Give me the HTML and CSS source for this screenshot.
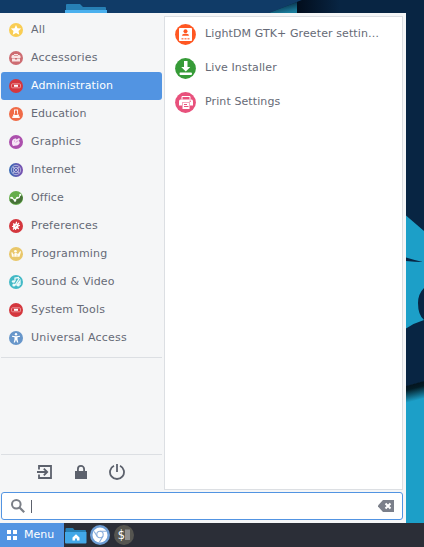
FILE: index.html
```html
<!DOCTYPE html>
<html lang="en">
<head>
<meta charset="utf-8">
<title>Menu</title>
<link rel="stylesheet" href="styles.css">
</head>
<body>
<svg class="wallpaper" viewBox="0 0 424 547" aria-hidden="true">
  <defs>
    <linearGradient id="shade" gradientUnits="userSpaceOnUse" x1="406" y1="386" x2="410" y2="402"><stop offset="0" stop-color="#04141f"/><stop offset=".25" stop-color="#031c26"/><stop offset="1" stop-color="#1c9fc8"/></linearGradient>
    <linearGradient id="top" x1="0" x2="1"><stop offset="0" stop-color="#020d1c"/><stop offset="1" stop-color="#082543"/></linearGradient>
    <linearGradient id="teal" x1="0" y1="0" x2=".5" y2="1"><stop offset=".3" stop-color="#06223a"/><stop offset="1" stop-color="#1b7d9c"/></linearGradient>
  </defs>
  <path fill="#082543" d="M0 0h424v547H0z"/>
  <path fill="#103b67" d="M0 0h302l-33 13H0z"/>
  <path fill="url(#teal)" d="M302 0l-33 13h28V2z"/>
  <path fill="url(#top)" d="M297 2l5-2h38v13h-43z"/>
  <path fill="#2780b5" d="M66 13V5q0-1 1-1h13l3 3h22q1 0 1 1v5z"/>
  <path fill="#4ab0ee" d="M65 10h42v3H65z"/>
  <path fill="#1c9fc8" d="M406 215.500l18 15.500v316h-18z"/>
  <path fill="#082543" d="M406 257.500q8 2.500 17 4.500q-8-.2-17-1zM424 288q-6 6-6 15 0 12 6 17zM424 320q-10 3-18 8.500v58l18-5z"/>
  <path fill="url(#shade)" d="M406 386l18-5v17l-18 6z"/>
</svg>

<main class="menu">
  <div class="panes">
    <nav class="sidebar">
      <ul class="categories">
        <li class="category"><svg class="cat-icon" viewBox="0 0 14 14"><circle cx="7" cy="7" r="7" fill="#f9cd53"/><path fill="#fff" d="M7 2l1.500 3.200 3.700.3-2.700 2.400.8 3.800L7 9.900l-3.300 1.800.8-3.800L1.800 5.500l3.700-.3z"/></svg>All</li>
        <li class="category"><svg class="cat-icon" viewBox="0 0 14 14"><circle cx="7" cy="7" r="7" fill="#cd6c72"/><path fill="#f8e5e5" d="M5 4V3h4v1h1.500l1 1v2h-9V5l1-1zM3 7.600h3v.8h2v-.8h3V10.500H3z"/><path stroke="#cd6c72" stroke-width=".6" d="M5 4.500h4"/></svg>Accessories</li>
        <li class="category selected"><svg class="cat-icon" viewBox="0 0 14 14"><circle cx="7" cy="7" r="7" fill="#d4373e"/><rect x="2.500" y="4.800" width="9" height="4" rx="1" fill="#d4373e" stroke="#efabad" stroke-width=".8"/><path fill="#fff" d="M5 5.800h4v2H5z"/></svg>Administration</li>
        <li class="category tight"><svg class="cat-icon" viewBox="0 0 14 14"><circle cx="7" cy="7" r="7" fill="#f06b47"/><path fill="none" stroke="#fff" stroke-width=".9" d="M5 3h4M5.500 3v3.500L3.500 10.500h7L8.500 6.500V3"/><path fill="#fff" d="M5 8h4l1.200 2.500H3.800z"/></svg>Education</li>
        <li class="category"><svg class="cat-icon" viewBox="0 0 14 14"><circle cx="7" cy="7" r="7" fill="#ac50ad"/><path fill="#f5e5f5" d="M3 6q1-3 4-2.500l.5 1L10 3l1 1-1.200 2q1.700.5.7 2.500Q9 11 7 10.500L4 11 3 9z"/><path stroke="#ac50ad" stroke-width=".6" d="M5 6h1M7 7.500l2-2"/></svg>Graphics</li>
        <li class="category tight"><svg class="cat-icon" viewBox="0 0 14 14"><defs><linearGradient id="net"><stop stop-color="#376bb5"/><stop offset="1" stop-color="#7b50b0"/></linearGradient></defs><circle cx="7" cy="7" r="7" fill="url(#net)"/><g fill="none" stroke="#d6d5ee" stroke-width=".7"><circle cx="7" cy="7" r="4.700"/><circle cx="7" cy="7" r="2.700"/><path d="M3.700 3.700l6.600 6.600m0-6.600l-6.600 6.600"/></g></svg>Internet</li>
        <li class="category tight"><svg class="cat-icon" viewBox="0 0 14 14"><circle cx="7" cy="7" r="7" fill="#65ad4b"/><path fill="#477238" d="M.5 9L3 7l3 3 6-6 1.800 2A7 7 0 0 1 .5 9z"/><path fill="none" stroke="#fff" stroke-width="1.100" d="M1 7l1.500-.5L6 9.500l2-3 2 .2L11.500 3"/><g fill="#fff"><circle cx="2.800" cy="6.800" r="1"/><circle cx="6" cy="9.500" r="1.200"/><circle cx="8.500" cy="6.700" r="1"/><circle cx="11.300" cy="3.700" r="1"/></g></svg>Office</li>
        <li class="category"><svg class="cat-icon" viewBox="0 0 14 14"><circle cx="7" cy="7" r="7" fill="#d4373e"/><path fill="none" stroke="#fff" stroke-width="1.200" d="M7.500 2.800L6.500 11M3 7.500l8-1M4.200 4.500l5.600 5.500M4 10.500l6-6.500"/><circle cx="6.700" cy="7.300" r="2.700" fill="#fff"/><path stroke="#d4373e" stroke-width=".6" d="M6 7.500L8 6"/></svg>Preferences</li>
        <li class="category"><svg class="cat-icon" viewBox="0 0 14 14"><circle cx="7" cy="7" r="7" fill="#e9c76a"/><g fill="#fffdf5"><circle cx="6.500" cy="4.200" r="1.300"/><path d="M5.500 6.500l1.200-.8L9 7l2.300-3 .7.700-1.500 5H3L2.300 5.500l1-.3 1 2z"/></g><path stroke="#e9c76a" stroke-width=".6" d="M5 7v2.500M8 7.500v2"/></svg>Programming</li>
        <li class="category"><svg class="cat-icon" viewBox="0 0 14 14"><circle cx="7" cy="7" r="7" fill="#42b9c6"/><g fill="none" stroke="#eefafa" stroke-width="1.300"><path d="M6 6V3l4-.5M5.500 11l5-8M7.500 10.500L11 6v4"/></g><g fill="#eefafa"><ellipse cx="4.500" cy="6.500" rx="1.700" ry="1.300"/><circle cx="4.800" cy="10" r="1.500"/><circle cx="9.300" cy="10" r="1.500"/></g></svg>Sound &amp; Video</li>
        <li class="category"><svg class="cat-icon" viewBox="0 0 14 14"><circle cx="7" cy="7" r="7" fill="#d4373e"/><rect x="2.500" y="4.800" width="9" height="4" rx="1" fill="#d4373e" stroke="#efabad" stroke-width=".8"/><path fill="#fff" d="M5 5.800h4v2H5z"/></svg>System Tools</li>
        <li class="category"><svg class="cat-icon" viewBox="0 0 14 14"><circle cx="7" cy="7" r="7" fill="#6796ca"/><circle cx="7" cy="3.200" r="1.200" fill="#fff"/><path fill="#fff" d="M3 4.800l4 .4 4-.4v1L8.500 6.300v2l.8 3.200H8.100L7 8.700l-1.100 2.800H4.700l.8-3.200v-2L3 5.800z"/></svg>Universal Access</li>
      </ul>
      <div class="session">
        <svg viewBox="0 0 16 16"><path fill="none" stroke="#5c616c" stroke-width="1.800" d="M2 5.500V2h12v12H2v-3.500"/><path fill="none" stroke="#5c616c" stroke-width="1.800" d="M0 8h9.500M6.800 4.700L10.200 8l-3.400 3.300"/></svg>
        <svg viewBox="0 0 16 16"><path fill="#5c616c" d="M2 7h12v8H2z"/><path fill="none" stroke="#5c616c" stroke-width="1.800" d="M4.900 8V5a3.100 3.100 0 0 1 6.200 0v3"/></svg>
        <svg viewBox="0 0 16 16"><path fill="none" stroke="#5c616c" stroke-width="1.800" d="M5 1.700a7 7 0 1 0 6 0M8 0v8"/></svg>
      </div>
    </nav>
    <ul class="apps">
      <li class="app"><svg class="app-icon" viewBox="0 0 21 21"><circle cx="10.500" cy="10.500" r="10.400" fill="#ff5722"/><rect x="4" y="4" width="13" height="13" rx=".8" fill="#fff"/><g fill="#ff5722"><circle cx="10.500" cy="7.200" r="2"/><path d="M7 11.800q0-2 2.500-2h2q2.500 0 2.500 2z"/><path opacity=".7" d="M6.500 14h2v1.500h-2zM9.500 14h2v1.500h-2zM12.500 14h2v1.500h-2z"/></g></svg><span class="app-name">LightDM GTK+ Greeter settin…</span></li>
      <li class="app"><svg class="app-icon" viewBox="0 0 21 21"><circle cx="10.500" cy="10.500" r="10.400" fill="#369b37"/><path fill="#fff" d="M9 3h3.500v6h2.800l-4.500 4.500L6.200 9H9zM5.500 14.500h10.500q1 0 1 1.200t-1 1.300H5.500q-1 0-1-1.300t1-1.200z"/></svg><span class="app-name">Live Installer</span></li>
      <li class="app"><svg class="app-icon" viewBox="0 0 21 21"><circle cx="10.500" cy="10.500" r="10.400" fill="#e8517c"/><path fill="none" stroke="#fff" d="M7 7.500v-3h8v3"/><path fill="#fff" d="M5.500 7.500h11q1.500 0 1.500 2v4h-3v-3H7v3H4v-4q0-2 1.500-2zM7.500 11h7v6h-7z"/><path stroke="#e8517c" d="M9 12.500h3M9 14.500h4.500M14.500 9.200h1.500"/></svg><span class="app-name">Print Settings</span></li>
    </ul>
  </div>
  <div class="search">
    <svg class="lens" viewBox="0 0 14 14"><circle cx="5.300" cy="5.300" r="4.300" fill="none" stroke="#7b7f87" stroke-width="2"/><path stroke="#7b7f87" stroke-width="2.200" d="M8.500 8.500l4.700 4.700"/></svg>
    <span class="caret"></span>
    <svg class="clear" viewBox="0 0 16 12"><path fill="#7b7f8a" d="M5 0h11v12H5L0 6.500v-1z"/><path stroke="#fff" stroke-width="2" d="M7.500 3.500l5 5m0-5l-5 5"/></svg>
  </div>
</main>

<footer class="taskbar">
  <div class="menu-button"><svg viewBox="0 0 10 10"><path fill="#fff" d="M0 0h4v4H0zM6 0h4v4H6zM0 6h4v4H0zM6 6h4v4H6z"/></svg>Menu</div>
  <svg class="folder" viewBox="0 0 22 17"><path fill="#2780b5" d="M.5 6V2q0-1 1-1H8l1.500 2H20q1 0 1 1v2z"/><path fill="#42a8e8" d="M0 5h21.500v10.500q0 1-1 1H1q-1 0-1-1z"/><path fill="#fff" d="M7.500 10.500L11 7.300l3.500 3.200v3H12v-2h-2v2H7.500z"/></svg>
  <svg class="launcher" viewBox="0 0 20 20"><circle cx="10" cy="10" r="10" fill="#6f9fd6"/><circle cx="10" cy="10" r="7.500" fill="#fff"/><g fill="none" stroke="#8aaedb" stroke-width="1.100"><circle cx="10" cy="9.500" r="3.200"/><path d="M10 6.300h6.500M7 11.200L4.200 6.500M13 11.200L9.500 17"/></g></svg>
  <svg class="launcher" viewBox="0 0 20 20"><circle cx="10" cy="10" r="10" fill="#555550"/><path fill="#8f8f8f" d="M11 4.500h5V15h-5z"/><text class="prompt" x="3.500" y="14">$</text></svg>
</footer>
</body>
</html>
```
FILE: styles.css
```css
* { box-sizing: border-box; }
html, body { margin: 0; height: 100%; overflow: hidden; }
body {
  display: flex;
  flex-direction: column;
  padding-top: 13px;
  font: 11px/16px "DejaVu Sans", sans-serif;
  color: #666a76;
}
svg { display: block; flex: none; }
ul { margin: 0; padding: 0; list-style: none; }
.wallpaper { position: absolute; top: 0; left: 0; width: 424px; height: 547px; z-index: -1; }

.menu {
  display: flex;
  flex-direction: column;
  width: 406px;
  height: 510px;
  padding: 3px 3px 3px 1px;
  gap: 2px;
  background: #f5f6f7;
}
.panes { display: flex; flex: 1; gap: 2px; min-height: 0; }
.sidebar { display: flex; flex-direction: column; width: 161px; }
.categories { height: 342px; border-bottom: 1px solid #dcdfe3; }
.category {
  display: flex;
  align-items: flex-start;
  height: 28px;
  padding: 6px 8px 0;
  gap: 8px;
  letter-spacing: .21px;
}
.tight { letter-spacing: .08px; }
.selected { background: #5294e2; color: #fff; border-radius: 3px; letter-spacing: .12px; }
.cat-icon { width: 14px; height: 14px; margin-top: 1px; }
.session {
  display: flex;
  justify-content: center;
  gap: 20px;
  margin-top: 96px;
  padding: 9px 2px 0 0;
  border-top: 1px solid #dcdfe3;
}
.session svg { width: 16px; height: 16px; }
.apps {
  flex: 1;
  min-width: 0;
  padding: 0 10px;
  background: #fff;
  border: 1px solid #dcdfe3;
  letter-spacing: .1px;
}
.app { display: flex; align-items: center; height: 34px; gap: 9px; }
.app-icon { width: 21px; height: 21px; }
.app-name { white-space: nowrap; }

.search {
  display: flex;
  align-items: center;
  height: 28px;
  padding: 0 8px 0 9px;
  background: #fff;
  border: 1px solid #5294e2;
  border-radius: 3px;
}
.lens { width: 14px; height: 14px; }
.caret { width: 1px; height: 13px; margin-left: 6px; background: #5c616c; }
.clear { width: 16px; height: 12px; margin-left: auto; }

.taskbar { display: flex; align-items: center; height: 24px; background: #2b2e37; }
.menu-button {
  display: flex;
  align-items: center;
  width: 64px;
  height: 24px;
  padding-left: 7px;
  gap: 7px;
  background: #5294e2;
  color: #fff;
}
.menu-button svg { width: 10px; height: 10px; }
.folder { width: 22px; height: 17px; margin: 0 2px 0 1px; }
.launcher { width: 20px; height: 20px; margin-left: 1px; margin-right: 3px; }
.prompt { font: 12px "DejaVu Sans Mono", monospace; fill: #fff; }
```
